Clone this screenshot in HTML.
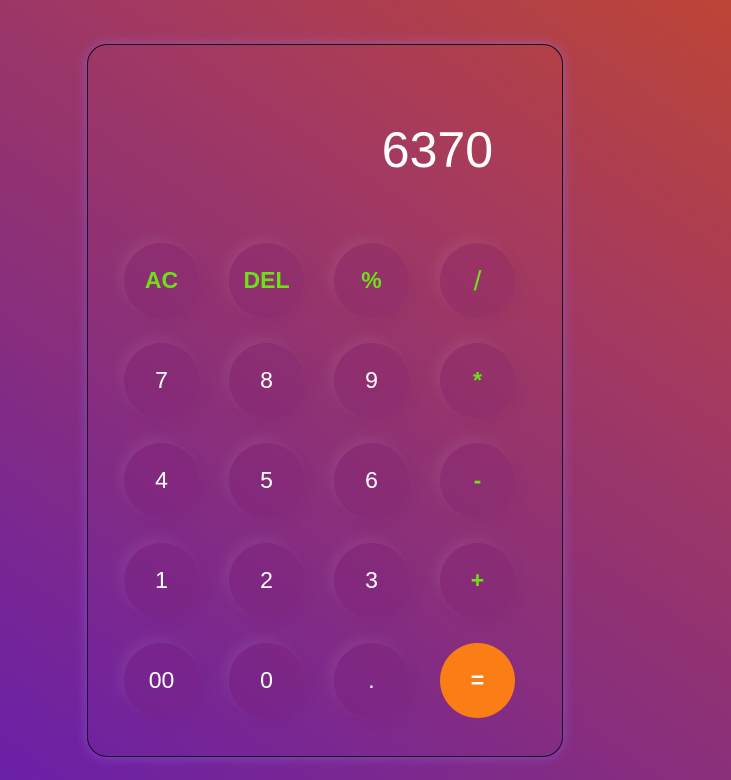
<!DOCTYPE html>
<html><head><style>
html,body{margin:0;padding:0;width:731px;height:780px;overflow:hidden;}
body{background:linear-gradient(35deg,#6a20a8 0%,#8a2f7a 40%,#a53a5e 70%,#bd4536 100%);font-family:"Liberation Sans",sans-serif;position:relative;}
.card{position:absolute;left:87px;top:44px;width:474px;height:711px;border:1px solid #1a0a20;border-radius:20px;box-shadow:0 0 12px rgba(150,120,255,0.45);}
.disp{position:absolute;right:69px;top:75px;font-size:50px;color:#fff;line-height:60px;}
.b{position:absolute;width:75px;height:75px;border-radius:50%;background:rgba(120,30,110,0.18);box-shadow:-5px -5px 12px rgba(255,255,255,0.07),5px 5px 12px rgba(80,0,80,0.06);color:#fff;font-size:23px;display:flex;align-items:center;justify-content:center;}
.g{color:#6ee01a;font-weight:bold;}
.eq{background:#fb7d15;box-shadow:none;font-weight:bold;}
</style></head><body>
<div class="card"><div class="disp">6370</div></div>
<div class="b g" style="left:124px;top:243px">AC</div>
<div class="b g" style="left:229px;top:243px">DEL</div>
<div class="b g" style="left:334px;top:243px">%</div>
<div class="b g" style="left:440px;top:243px;font-size:28px;font-weight:normal">/</div>
<div class="b" style="left:124px;top:343px">7</div>
<div class="b" style="left:229px;top:343px">8</div>
<div class="b" style="left:334px;top:343px">9</div>
<div class="b g" style="left:440px;top:343px">*</div>
<div class="b" style="left:124px;top:443px">4</div>
<div class="b" style="left:229px;top:443px">5</div>
<div class="b" style="left:334px;top:443px">6</div>
<div class="b g" style="left:440px;top:443px">-</div>
<div class="b" style="left:124px;top:543px">1</div>
<div class="b" style="left:229px;top:543px">2</div>
<div class="b" style="left:334px;top:543px">3</div>
<div class="b g" style="left:440px;top:543px">+</div>
<div class="b" style="left:124px;top:643px">00</div>
<div class="b" style="left:229px;top:643px">0</div>
<div class="b" style="left:334px;top:643px">.</div>
<div class="b eq" style="left:440px;top:643px">=</div>
</body></html>
